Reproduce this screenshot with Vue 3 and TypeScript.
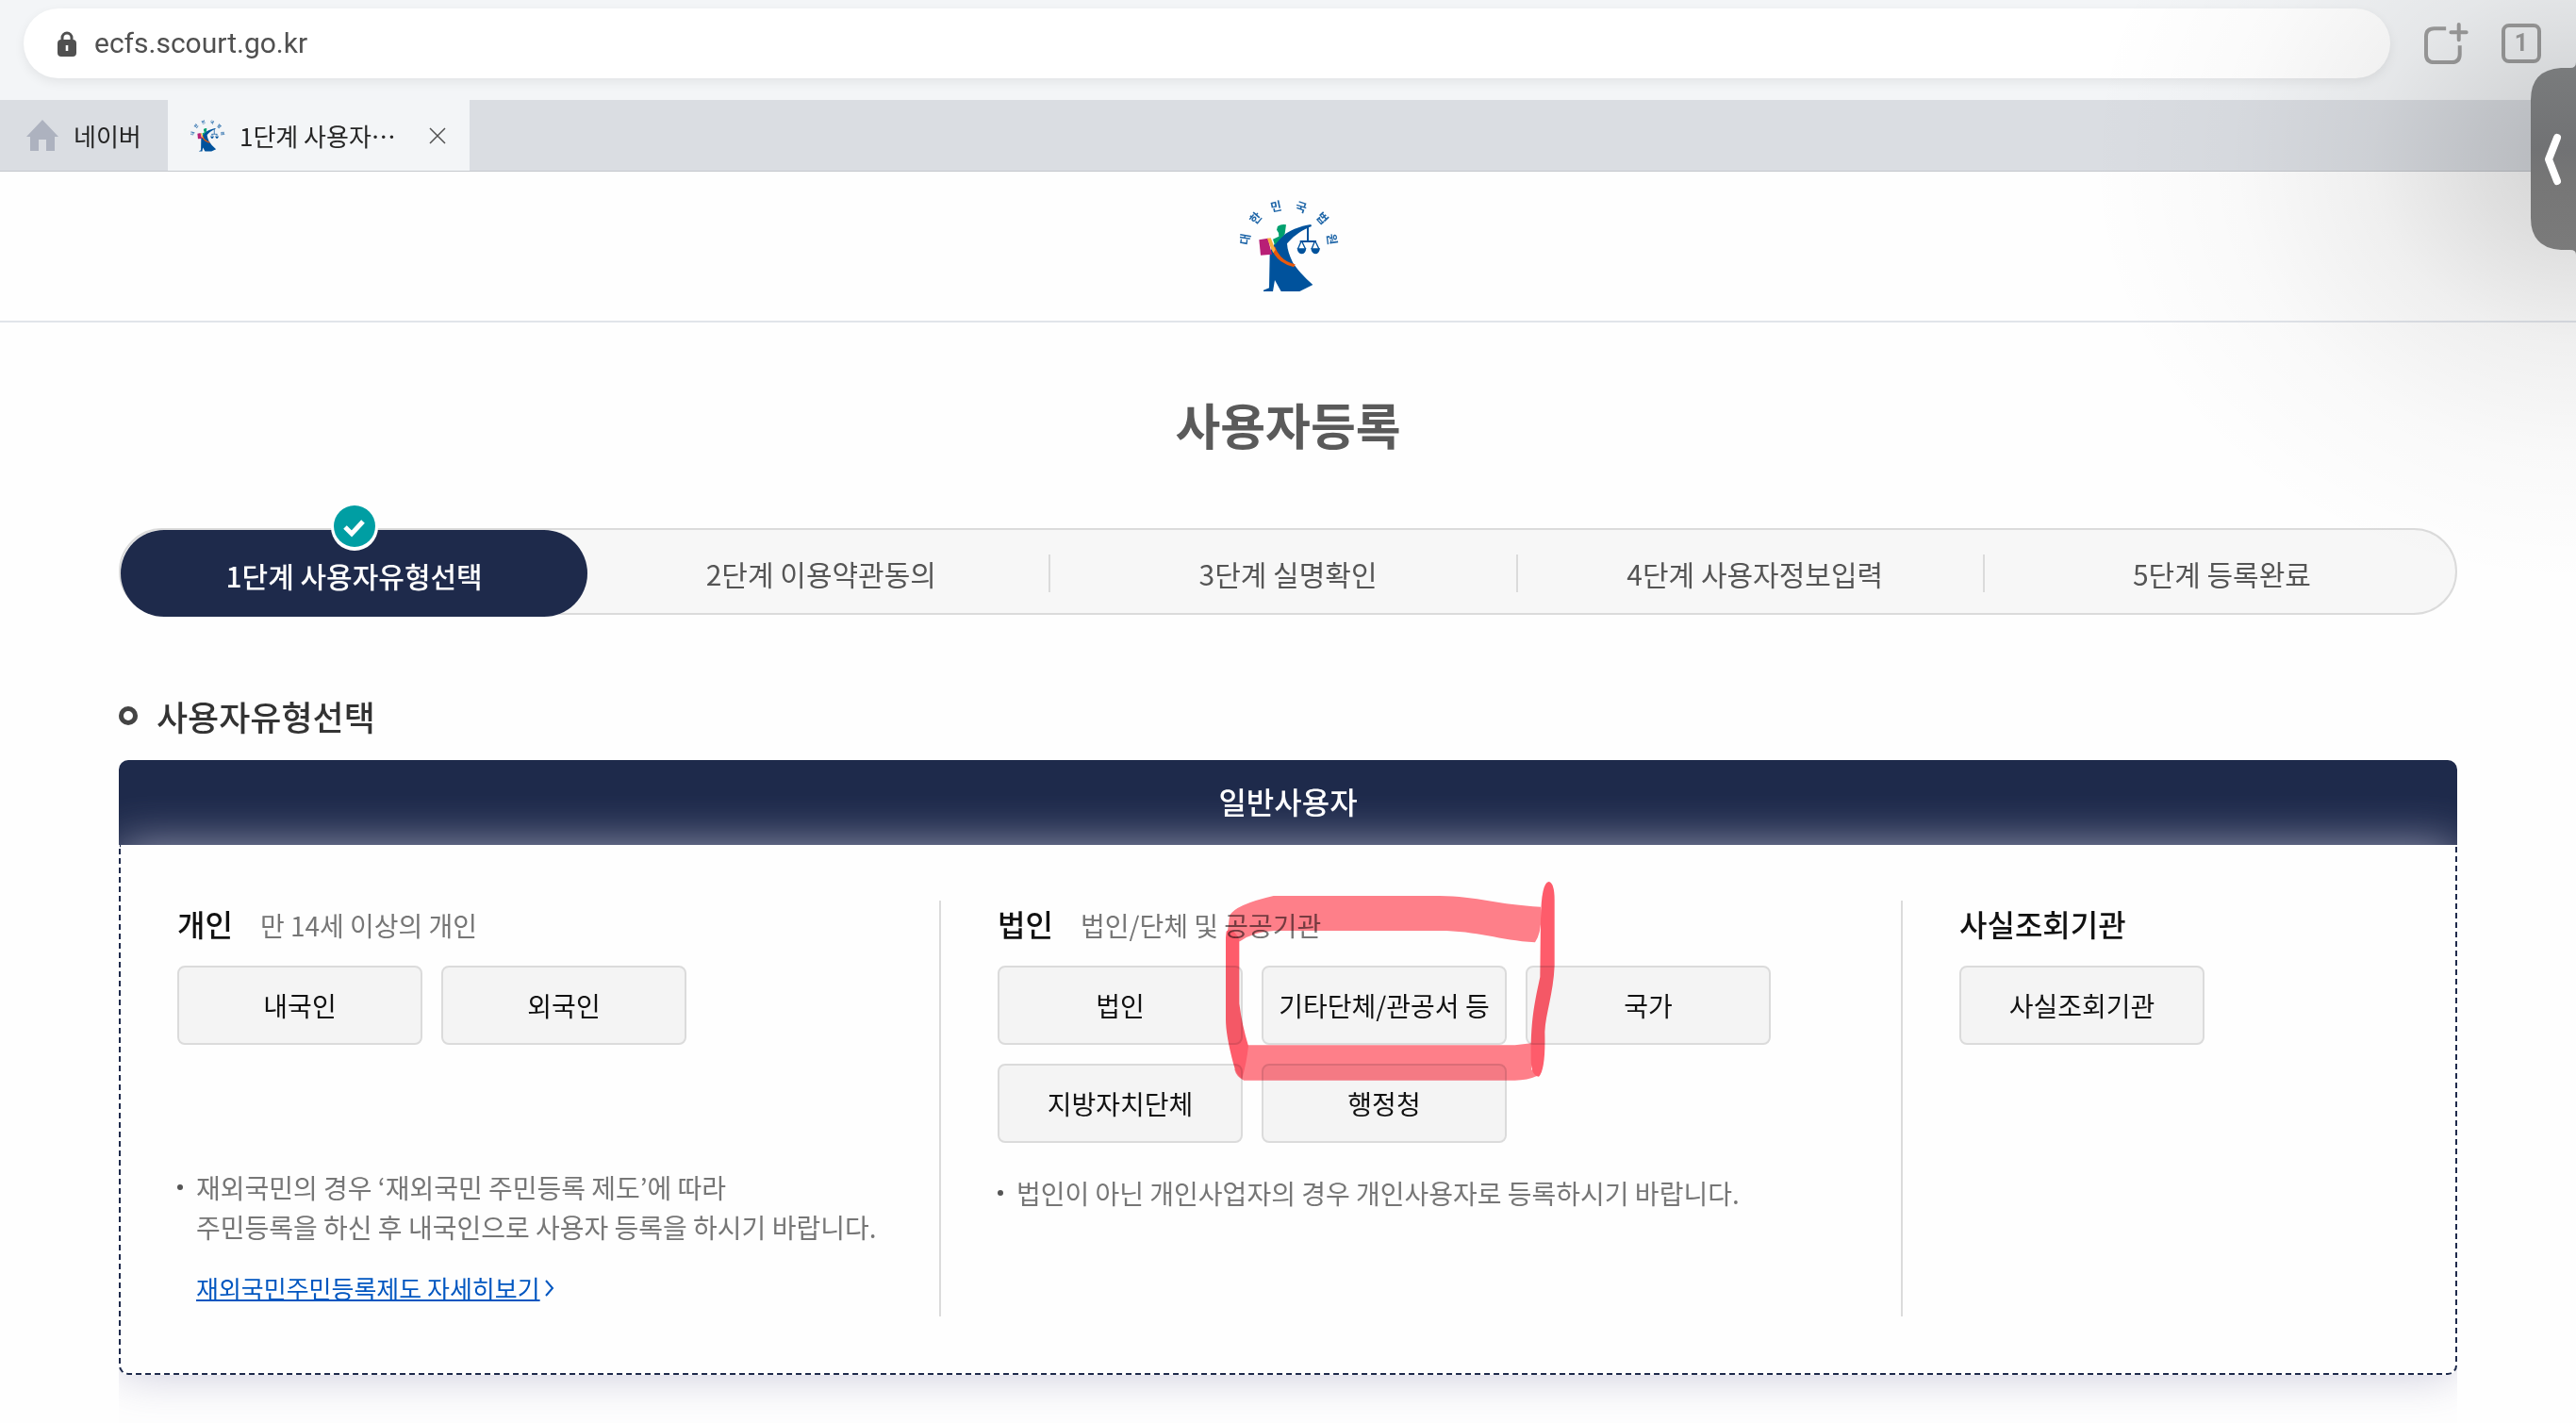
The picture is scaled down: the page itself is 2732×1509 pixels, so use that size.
<script setup lang="ts">
import { h, ref } from 'vue'

interface UserGroup {
  id: string
  title: string
  hint?: string
  types: string[]
  notes: string[]
  link?: string
  marked?: boolean
}

const address = ref('ecfs.scourt.go.kr')

const steps: string[] = [
  '1단계 사용자유형선택',
  '2단계 이용약관동의',
  '3단계 실명확인',
  '4단계 사용자정보입력',
  '5단계 등록완료',
]
const current = 0

const groups: UserGroup[] = [
  {
    id: 'person',
    title: '개인',
    hint: '만 14세 이상의 개인',
    types: ['내국인', '외국인'],
    notes: [
      '재외국민의 경우 ‘재외국민 주민등록 제도’에 따라',
      '주민등록을 하신 후 내국인으로 사용자 등록을 하시기 바랍니다.',
    ],
    link: '재외국민주민등록제도 자세히보기',
  },
  {
    id: 'corporation',
    title: '법인',
    hint: '법인/단체 및 공공기관',
    types: ['법인', '기타단체/관공서 등', '국가', '지방자치단체', '행정청'],
    notes: ['법인이 아닌 개인사업자의 경우 개인사용자로 등록하시기 바랍니다.'],
    marked: true,
  },
  {
    id: 'inquiry',
    title: '사실조회기관',
    types: ['사실조회기관'],
    notes: [],
  },
]

const emblemLetters = [
  { char: '대', x: 124, y: 188, angle: -80 },
  { char: '한', x: 158, y: 121, angle: -50 },
  { char: '민', x: 223, y: 84, angle: -12 },
  { char: '국', x: 303, y: 86, angle: 18 },
  { char: '법', x: 370, y: 121, angle: 48 },
  { char: '원', x: 401, y: 188, angle: 82 },
]

const emblemShapes = [
  {
    fill: '#00529c',
    d: 'M334 141 C300 146 262 160 236 184 C218 200 206 218 203 236 L201 343 L183 350 V354 H213 L219 318 L239 354 H298 L340 333 C312 308 288 282 276 262 C266 240 259 222 258 202 C276 180 302 160 336 147 Z',
  },
  { fill: '#00a06e', d: 'M228 147 Q240 139 255 142 L251 170 L246 178 Q232 190 219 207 L213 188 L232 179 L231 168 L225 158 Z' },
  { fill: '#b81f76', d: 'M169 190 L197 185 L210 236 L174 239 Z' },
  { fill: '#e8590c', d: 'M208 214 Q214 240 238 258 Q258 272 280 277 L284 268 Q256 262 238 243 Q226 230 220 212 Z' },
  { fill: '#fbb040', d: 'M195 185 L206 184 L221 221 L214 232 Q204 212 195 185 Z' },
  { fill: 'none', stroke: '#00529c', 'stroke-width': 6, d: 'M324 144 V193 M299 195 H351' },
  {
    fill: 'none',
    stroke: '#00529c',
    'stroke-width': 4,
    d: 'M303 195 L292 220 M305 195 L317 220 M346 195 L336 220 M348 195 L360 220',
  },
  { fill: '#00529c', d: 'M290 217 H319 Q317 235 304 235 Q292 234 290 217 Z M334 217 H363 Q360 235 348 235 Q336 234 334 217 Z' },
]

// Court emblem, shared by the tab icon and the site header
const CourtEmblem = () =>
  h('svg', { viewBox: '105 66 312 288', 'aria-hidden': 'true' }, [
    h(
      'g',
      { fill: '#1f66a8', 'font-size': 38, 'font-weight': 700, 'text-anchor': 'middle' },
      emblemLetters.map((l) =>
        h('text', { transform: `translate(${l.x} ${l.y}) rotate(${l.angle})`, dy: 14 }, l.char),
      ),
    ),
    ...emblemShapes.map((shape) => h('path', shape)),
  ])
</script>

<template>
  <div class="page">
    <header class="browser">
      <div class="toolbar">
        <div class="address">
          <svg class="lock" viewBox="0 0 20 27" aria-hidden="true">
            <path d="M5 11 V7 a5 5 0 0 1 10 0 V11" fill="none" stroke="#505050" stroke-width="3" />
            <path
              fill="#505050"
              fill-rule="evenodd"
              d="M4 9 H16 a4 4 0 0 1 4 4 V23 a4 4 0 0 1 -4 4 H4 a4 4 0 0 1 -4 -4 V13 a4 4 0 0 1 4 -4 Z M8.700 15 V21 H11.300 V15 Z"
            />
          </svg>
          <input v-model="address" class="address-input" type="text" aria-label="주소" />
        </div>
        <button class="tool new-tab" type="button" aria-label="새 탭">
          <svg viewBox="813 68 142 136" fill="none" stroke="#9e9e9e" stroke-width="12">
            <path d="M883 87 H845 Q819 87 819 113 V169 Q819 195 845 195 H901 Q927 195 927 169 V141" />
            <path d="M924 74 V123 M899 99 H948" stroke-linecap="round" />
          </svg>
        </button>
        <button class="tool tab-count" type="button" aria-label="열린 탭">1</button>
      </div>

      <nav class="tabs">
        <a class="tab tab-home" href="#naver">
          <svg class="house" viewBox="0 0 34 33" aria-hidden="true">
            <path fill="#adb2bf" d="M17 0 L34 18 H30 V33 H21 V21 H13 V33 H4 V18 H0 Z" />
          </svg>
          네이버
        </a>
        <div class="tab tab-active">
          <CourtEmblem class="favicon" />
          <span class="tab-title">1단계 사용자⋯</span>
          <button class="tab-close" type="button" aria-label="탭 닫기">
            <svg viewBox="0 0 18 18" aria-hidden="true">
              <path d="M1 1 L17 17 M17 1 L1 17" fill="none" stroke="#505050" stroke-width="1.500" />
            </svg>
          </button>
        </div>
      </nav>
    </header>

    <div class="brand">
      <a href="#home" aria-label="대한민국 법원"><CourtEmblem class="brand-logo" /></a>
    </div>

    <main class="content">
      <h1 class="title">사용자등록</h1>

      <ol class="steps">
        <li v-for="(step, i) in steps" :key="step" class="step" :class="{ active: i === current, plain: i > current && i < steps.length - 1 }">
          <svg v-if="i === current" class="check" viewBox="0 0 50 50" aria-hidden="true">
            <circle cx="25" cy="25" r="25" fill="#fff" />
            <circle cx="25" cy="24" r="22" fill="#009ea3" />
            <path d="M15 25 L22 32 L34 19" fill="none" stroke="#fff" stroke-width="5" />
          </svg>
          {{ step }}
        </li>
      </ol>

      <h2 class="subtitle">사용자유형선택</h2>

      <section class="panel" aria-labelledby="panel-head">
        <h3 id="panel-head" class="panel-head">일반사용자</h3>
        <div class="panel-body">
          <div v-for="group in groups" :key="group.id" class="group" :class="group.id">
            <div class="group-head">
              <h4 class="group-title">{{ group.title }}</h4>
              <span v-if="group.hint" class="group-hint">{{ group.hint }}</span>
            </div>
            <div class="types">
              <button v-for="type in group.types" :key="type" class="type" type="button">{{ type }}</button>
            </div>
            <p v-if="group.notes.length" class="note">
              <span v-for="line in group.notes" :key="line" class="note-line">{{ line }}</span>
            </p>
            <a v-if="group.link" class="more" href="#guide">
              <span class="more-text">{{ group.link }}</span>
              <svg class="more-arrow" viewBox="0 0 10 18" aria-hidden="true">
                <path d="M1 1 L8 9 L1 17" fill="none" stroke="#0056c0" stroke-width="2" />
              </svg>
            </a>
            <svg v-if="group.marked" class="marker" viewBox="0 0 1200 720" aria-hidden="true">
              <path
                fill="#ff7f8a"
                d="M72 150 Q90 115 212 87 H740 C860 88 930 116 1062 122 Q1068 200 1044 235 C930 228 860 198 740 198 H215 Q150 200 105 232 L62 232 Z"
              />
              <path
                fill="#ff7f8a"
                d="M128 562 H980 L1032 556 V640 Q1066 650 1050 660 Q1020 674 980 674 H118 Q94 664 88 640 Z"
              />
              <path
                fill="#ff5c6b"
                d="M62 200 Q80 180 103 226 V430 Q112 500 132 565 Q126 620 112 668 Q94 660 84 620 Q60 530 60 480 V220 Z"
              />
              <path
                fill="#ff5c6b"
                d="M1062 160 Q1064 44 1088 42 Q1106 46 1106 100 V310 C1102 400 1078 460 1075 520 Q1078 640 1056 662 Q1030 660 1031 600 C1030 480 1044 420 1060 345 Z"
              />
            </svg>
          </div>
        </div>
      </section>
    </main>

    <div class="edge">
      <div class="edge-shade"></div>
      <button class="edge-handle" type="button" aria-label="패널 열기">
        <svg viewBox="0 0 48 204">
          <defs>
            <linearGradient id="handle-fill" x1="0" y1="0" x2="0" y2="1">
              <stop offset="0" stop-color="#7a7c7d" />
              <stop offset="0.45" stop-color="#717274" />
              <stop offset="0.62" stop-color="#767676" />
              <stop offset="1" stop-color="#7b7b7b" />
            </linearGradient>
          </defs>
          <path fill="url(#handle-fill)" d="M48 0 Q48 6 42 6 H32 Q0 8 0 40 V165 Q0 197 32 199 H42 Q48 199 48 204 Z" />
          <path d="M28 80 L19 103 L28 126" fill="none" stroke="#fff" stroke-width="8" stroke-linecap="round" stroke-linejoin="round" />
        </svg>
      </button>
    </div>
  </div>
</template>

<style>
body {
  background: #fefefe;
}
</style>

<style scoped>
.page {
  position: relative;
  overflow: hidden;
  color: #111;
  font-family: 'Noto Sans CJK KR', 'Noto Sans', sans-serif;
}

.page * {
  box-sizing: border-box;
}

button {
  padding: 0;
  border: 0;
  background: none;
  color: inherit;
  font-family: inherit;
}

a {
  color: inherit;
  text-decoration: none;
}

svg {
  display: block;
}

/* Browser chrome */
.toolbar {
  display: flex;
  align-items: center;
  height: 106px;
  padding: 0 37px 14px 25px;
  background: #f3f5f7;
}

.address {
  display: flex;
  flex: 1;
  align-items: center;
  gap: 19px;
  height: 74px;
  margin-right: 36px;
  padding: 0 36px;
  border-radius: 37px;
  background: #fff;
  box-shadow: 0 4px 12px rgba(0, 0, 0, 0.07);
}

.lock {
  width: 20px;
  height: 27px;
}

.address-input {
  flex: 1;
  min-width: 0;
  height: 40px;
  padding: 0 0 2px;
  border: 0;
  outline: 0;
  background: none;
  color: #505050;
  font-family: Roboto, sans-serif;
  font-size: 30px;
}

.new-tab {
  width: 47px;
  margin-right: 35px;
}

.tab-count {
  width: 42px;
  height: 42px;
  border: 4px solid #9e9e9e;
  border-radius: 8px;
  color: #9e9e9e;
  font-family: Roboto, sans-serif;
  font-size: 25px;
  font-weight: 700;
  line-height: 34px;
}

.tabs {
  display: flex;
  height: 76px;
  border-bottom: 1px solid #c4c7cc;
  background: #dadde2;
  color: #252525;
  font-size: 26px;
}

.tab {
  display: flex;
  align-items: center;
}

.tab-home {
  gap: 16px;
  width: 178px;
  padding-left: 28px;
}

.house {
  width: 34px;
  height: 33px;
}

.tab-active {
  width: 320px;
  padding: 0 25px 0 24px;
  background: #f3f5f7;
}

.favicon {
  width: 36px;
  height: 38px;
  margin-right: 16px;
  overflow: visible;
}

.tab-title {
  flex: 1;
  white-space: nowrap;
}

.tab-close {
  width: 18px;
  height: 18px;
}

/* Site header */
.brand {
  display: flex;
  align-items: center;
  justify-content: center;
  height: 160px;
  border-bottom: 2px solid #e1e4ea;
}

.brand-logo {
  width: 104px;
  height: 96px;
  overflow: visible;
}

.content {
  padding: 0 126px;
}

.title {
  margin: 71px 0 73px;
  color: #5a5a5a;
  font-size: 52px;
  font-weight: 700;
  line-height: 74px;
  text-align: center;
}

/* Steps */
.steps {
  display: flex;
  height: 92px;
  margin: 0;
  padding: 0;
  border: 2px solid #dbdbdb;
  border-radius: 46px;
  background: #f7f7f7;
  list-style: none;
}

.step {
  position: relative;
  display: flex;
  flex: 1;
  align-items: center;
  justify-content: center;
  padding-top: 4px;
  color: #555;
  font-size: 30px;
}

.step.active {
  height: 92px;
  border-radius: 46px;
  background: #1e2a4b;
  color: #fff;
  font-weight: 500;
}

.step.plain::after {
  position: absolute;
  top: 26px;
  right: 4px;
  width: 2px;
  height: 40px;
  background: #dbdbdb;
  content: '';
}

.check {
  position: absolute;
  top: -28px;
  left: calc(50% - 25px);
  width: 50px;
  height: 50px;
}

.subtitle {
  display: flex;
  align-items: center;
  gap: 20px;
  margin: 80px 0 20px;
  color: #333;
  font-size: 36px;
  font-weight: 500;
  line-height: 54px;
}

.subtitle::before {
  width: 10px;
  height: 10px;
  border: 5px solid #444;
  border-radius: 50%;
  content: '';
}

/* Selection panel */
.panel {
  overflow: hidden;
  padding-bottom: 51px;
}

.panel-head {
  height: 90px;
  margin: 0;
  border-radius: 10px 10px 0 0;
  background: #1e2a4b;
  color: #fff;
  font-size: 32px;
  font-weight: 500;
  line-height: 86px;
  text-align: center;
}

.panel-body {
  display: grid;
  grid-template-columns: 868fr 1020fr 588fr;
  padding: 59px 0 60px;
  border: 2px dashed #1e2a4b;
  border-top: 0;
  border-radius: 0 0 10px 10px;
  background: #fefefe;
  box-shadow: 0 0 50px rgba(188, 187, 209, 0.78);
}

.group {
  position: relative;
  min-height: 441px;
  padding-left: 60px;
}

.group + .group {
  border-left: 2px solid #dbdbdb;
}

.group-head {
  display: flex;
  align-items: baseline;
  gap: 29px;
  height: 69px;
}

.group-title {
  margin: 0;
  font-size: 32px;
  font-weight: 500;
  line-height: 48px;
}

.group-hint {
  color: #767676;
  font-size: 28px;
  line-height: 42px;
}

.types {
  display: flex;
  flex-wrap: wrap;
  gap: 20px;
}

.type {
  width: 260px;
  height: 84px;
  border: 2px solid #dbdbdb;
  border-radius: 8px;
  background: #f4f4f4;
  font-size: 28px;
}

.note {
  position: relative;
  margin: 32px 0 0;
  padding-left: 20px;
  color: #767676;
  font-size: 28px;
  line-height: 42px;
}

.person .note {
  margin-top: 130px;
}

.note::before {
  position: absolute;
  top: 18px;
  left: 0;
  width: 6px;
  height: 6px;
  border-radius: 50%;
  background: #555;
  content: '';
}

.note-line {
  display: block;
}

.more {
  display: flex;
  align-items: center;
  gap: 5px;
  margin: 23px 0 0 20px;
  color: #0056c0;
  font-size: 26px;
  line-height: 42px;
}

.more-text {
  text-decoration: underline;
  text-decoration-thickness: 2px;
}

.more-arrow {
  width: 10px;
  height: 18px;
}

/* Highlighter stroke drawn over the corporation types */
.marker {
  position: absolute;
  top: -34px;
  left: 282px;
  width: 400px;
  height: 240px;
  mix-blend-mode: multiply;
  pointer-events: none;
}

/* Device edge panel */
.edge {
  position: absolute;
  top: 0;
  right: 0;
  width: 540px;
  height: 650px;
  overflow: hidden;
  pointer-events: none;
}

.edge-shade {
  height: 100%;
  background: radial-gradient(
    ellipse 520px 450px at 540px 170px,
    rgba(0, 0, 0, 0.17) 0%,
    rgba(0, 0, 0, 0.12) 20%,
    rgba(0, 0, 0, 0.06) 42%,
    rgba(0, 0, 0, 0.02) 70%,
    rgba(0, 0, 0, 0) 100%
  );
}

.edge-handle {
  position: absolute;
  top: 66px;
  right: 0;
  width: 48px;
  height: 204px;
  pointer-events: auto;
}
</style>
